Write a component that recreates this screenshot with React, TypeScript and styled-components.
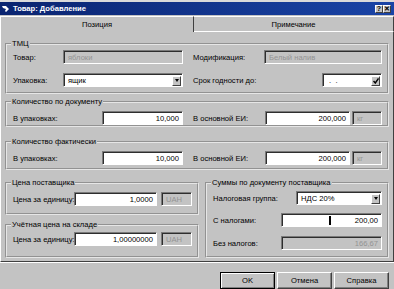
import React from "react";
import styled, { createGlobalStyle, css } from "styled-components";

const BG = "#c3c3c3";

const GlobalStyle = createGlobalStyle`
  html, body {
    margin: 0;
    padding: 0;
    background: ${BG};
  }
  body {
    font-family: "Liberation Sans", Arial, sans-serif;
    font-size: 7.6px;
    color: #000;
  }
`;

const Window = styled.div`
  width: 394px;
  height: 289px;
  box-sizing: border-box;
  border-top: 2px solid #dadada;
  background: ${BG};
  overflow: hidden;
  display: flex;
  flex-direction: column;
`;

// ---------------------------------------------
// Title bar
// ---------------------------------------------
const TitleBar = styled.div`
  height: 13px;
  display: flex;
  align-items: center;
  gap: 4px;
  padding: 0 3px 0 2px;
  background: linear-gradient(to right, #0a2470, #1a44a6);
  color: #fff;
  font-weight: bold;
  font-size: 7.6px;
`;

const CaptionButtons = styled.div`
  margin-left: auto;
  display: flex;
`;

const CaptionButton = styled.div`
  width: 8px;
  height: 8px;
  box-sizing: border-box;
  background: ${BG};
  border: 1px solid;
  border-color: #fff #404040 #404040 #fff;
  display: flex;
  align-items: center;
  justify-content: center;
  color: #000;
  font-size: 7px;
  font-weight: bold;
  line-height: 1;
`;

// ---------------------------------------------
// Tabs
// ---------------------------------------------
const TabBar = styled.div`
  display: flex;
  height: 16px;
  margin-top: 1px;
`;

const Tab = styled.div<{ $active?: boolean }>`
  box-sizing: border-box;
  display: flex;
  align-items: center;
  justify-content: center;
  border-top: 1px solid #fff;
  border-right: 1px solid #404040;
  ${(p) =>
    p.$active
      ? css`
          width: 194px;
          border-left: 1px solid #fff;
        `
      : css`
          flex: 1;
          border-bottom: 1px solid #fff;
        `}
`;

const Panel = styled.div`
  height: 230px;
  box-sizing: border-box;
  border-left: 1px solid #fff;
  border-right: 1px solid #404040;
  border-bottom: 1px solid #404040;
  box-shadow: 0 1px 0 #fff;
  padding: 0 4px;
  display: flex;
  flex-direction: column;
`;

// ---------------------------------------------
// Groups
// ---------------------------------------------
const Group = styled.fieldset<{ $mt?: number; $pt: number; $pb: number }>`
  margin: ${(p) => p.$mt || 0}px 0 0;
  padding: ${(p) => p.$pt}px 5px ${(p) => p.$pb}px 6px;
  border: 2px groove #e6e6e6;
  min-width: 0;
`;

const Legend = styled.legend`
  padding: 0 1px;
  margin-left: -2px;
  line-height: 11px;
  font-size: 7.6px;
`;

const Columns = styled.div`
  display: grid;
  grid-template-columns: 194px 184px;
  column-gap: 6px;
  margin-top: 7px;
`;

const Stack = styled.div`
  display: flex;
  flex-direction: column;
`;

const Row = styled.div<{ $cols: string; $mt?: number }>`
  display: grid;
  grid-template-columns: ${(p) => p.$cols};
  align-items: center;
  height: 14px;
  margin-top: ${(p) => p.$mt || 0}px;
`;

const Label = styled.span`
  white-space: nowrap;
`;

const Field = styled.div<{ $disabled?: boolean; $right?: boolean }>`
  height: 14px;
  box-sizing: border-box;
  border: 1px solid;
  border-color: #7a7a7a #fff #fff #7a7a7a;
  box-shadow: inset 1px 1px 0 #2e2e2e;
  background: ${(p) => (p.$disabled ? BG : "#fff")};
  color: ${(p) => (p.$disabled ? "#939393" : "#000")};
  display: flex;
  align-items: center;
  justify-content: ${(p) => (p.$right ? "flex-end" : "flex-start")};
  padding: 1px 3px 0 4px;
  white-space: nowrap;
  overflow: hidden;
`;

const DropButton = styled.div`
  margin-left: auto;
  margin-right: -2px;
  width: 9px;
  height: 10px;
  box-sizing: border-box;
  background: ${BG};
  border: 1px solid;
  border-color: #fff #404040 #404040 #fff;
  display: flex;
  align-items: center;
  justify-content: center;

  &::after {
    content: "";
    border-left: 2.5px solid transparent;
    border-right: 2.5px solid transparent;
    border-top: 3px solid #000;
  }
`;

const CheckButton = styled(DropButton)`
  &::after {
    display: none;
  }
`;

const Caret = styled.span`
  width: 2px;
  height: 9px;
  margin-left: 43px;
  background: #000;
`;

const Value = styled.span`
  margin-left: auto;
`;

// ---------------------------------------------
// Footer
// ---------------------------------------------
const Footer = styled.div`
  display: flex;
  justify-content: flex-end;
  gap: 2px;
  padding: 10px 5px 0 0;
`;

const Button = styled.div<{ $default?: boolean }>`
  width: 55px;
  height: 17px;
  box-sizing: border-box;
  border: 1px solid;
  border-color: #fff #404040 #404040 #fff;
  box-shadow: inset -1px -1px 0 #808080;
  display: flex;
  align-items: center;
  justify-content: center;
  ${(p) =>
    p.$default &&
    css`
      border-color: #000;
      box-shadow: inset 1px 1px 0 #fff, inset -1px -1px 0 #808080;
    `}
`;

const qtyCols = "89px 81px 10px 72px 85px 2px 30px";
const priceCols = "61px 83px 4px 31px";

export default function App() {
  return (
    <Window>
      <GlobalStyle />
      <TitleBar>
        <svg width="7" height="8" viewBox="0 0 7 8">
          <path d="M0 1 L4 1 L7 4 L4 7 L3 6 L4 4 L1 3 Z" fill="#fff" />
        </svg>
        <span>Товар: Добавление</span>
        <CaptionButtons>
          <CaptionButton>?</CaptionButton>
          <CaptionButton>✕</CaptionButton>
        </CaptionButtons>
      </TitleBar>

      <TabBar>
        <Tab $active>Позиция</Tab>
        <Tab>Примечание</Tab>
      </TabBar>

      <Panel>
        <Group $mt={6} $pt={1} $pb={5}>
          <Legend>ТМЦ</Legend>
          <Row $cols="50px 120px 10px 71px 118px">
            <Label>Товар:</Label>
            <Field $disabled>яблоки</Field>
            <span />
            <Label>Модификация:</Label>
            <Field $disabled>Белый налив</Field>
          </Row>
          <Row $cols="50px 120px 10px 129px 60px" $mt={9}>
            <Label>Упаковка:</Label>
            <Field>
              ящик
              <DropButton />
            </Field>
            <span />
            <Label>Срок годности до:</Label>
            <Field>
              &nbsp;.&nbsp;&nbsp;.
              <CheckButton>
                <svg width="6" height="6" viewBox="0 0 6 6">
                  <path d="M0.5 3 L2.3 5 L5.5 0.5" stroke="#000" strokeWidth="1.4" fill="none" />
                </svg>
              </CheckButton>
            </Field>
          </Row>
        </Group>

        <Group $mt={2} $pt={4} $pb={0}>
          <Legend>Количество по документу</Legend>
          <Row $cols={qtyCols}>
            <Label>В упаковках:</Label>
            <Field $right>10,000</Field>
            <span />
            <Label>В основной ЕИ:</Label>
            <Field $right>200,000</Field>
            <span />
            <Field $disabled>кг</Field>
          </Row>
        </Group>

        <Group $mt={9} $pt={4} $pb={3}>
          <Legend>Количество фактически</Legend>
          <Row $cols={qtyCols}>
            <Label>В упаковках:</Label>
            <Field $right>10,000</Field>
            <span />
            <Label>В основной ЕИ:</Label>
            <Field $right>200,000</Field>
            <span />
            <Field $disabled>кг</Field>
          </Row>
        </Group>

        <Columns>
          <Stack>
            <Group $pt={4} $pb={7}>
              <Legend>Цена поставщика</Legend>
              <Row $cols={priceCols}>
                <Label>Цена за единицу:</Label>
                <Field $right>1,0000</Field>
                <span />
                <Field $disabled>UAH</Field>
              </Row>
            </Group>
            <Group $mt={4} $pt={2} $pb={10}>
              <Legend>Учётная цена на складе</Legend>
              <Row $cols={priceCols}>
                <Label>Цена за единицу:</Label>
                <Field $right>1,00000000</Field>
                <span />
                <Field $disabled>UAH</Field>
              </Row>
            </Group>
          </Stack>

          <Group $pt={3} $pb={6}>
            <Legend>Суммы по документу поставщика</Legend>
            <Row $cols="83px 86px">
              <Label>Налоговая группа:</Label>
              <Field>
                НДС 20%
                <DropButton />
              </Field>
            </Row>
            <Row $cols="68px 101px" $mt={8}>
              <Label>С налогами:</Label>
              <Field>
                <Caret />
                <Value>200,00</Value>
              </Field>
            </Row>
            <Row $cols="68px 101px" $mt={9}>
              <Label>Без налогов:</Label>
              <Field $disabled $right>
                166,67
              </Field>
            </Row>
          </Group>
        </Columns>
      </Panel>

      <Footer>
        <Button $default>OK</Button>
        <Button>Отмена</Button>
        <Button>Справка</Button>
      </Footer>
    </Window>
  );
}
